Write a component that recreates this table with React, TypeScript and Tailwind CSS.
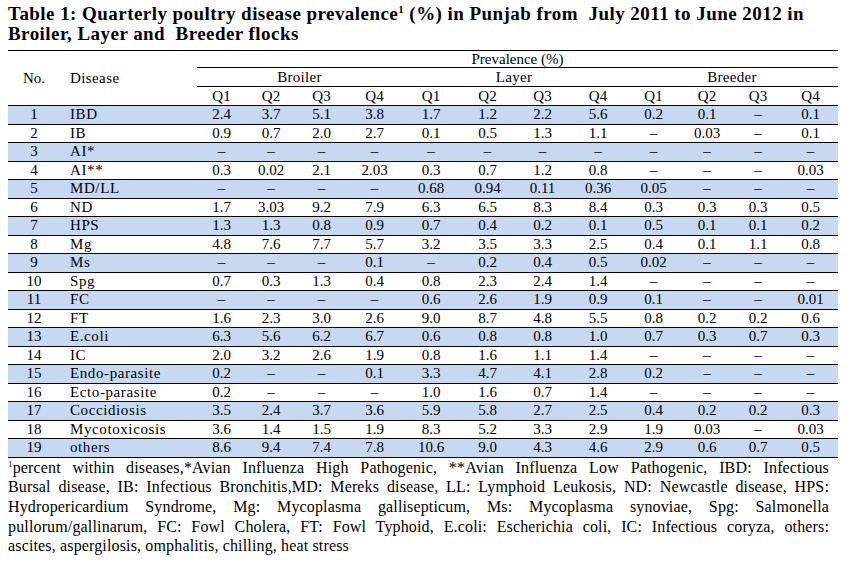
const widths = [49, 50, 51, 55, 58, 55, 55, 56, 55, 52, 50, 55];

type Row = [string, string, string[]];

const rows: Row[] = [
  ['1', 'IBD', ['2.4', '3.7', '5.1', '3.8', '1.7', '1.2', '2.2', '5.6', '0.2', '0.1', '–', '0.1']],
  ['2', 'IB', ['0.9', '0.7', '2.0', '2.7', '0.1', '0.5', '1.3', '1.1', '–', '0.03', '–', '0.1']],
  ['3', 'AI*', ['–', '–', '–', '–', '–', '–', '–', '–', '–', '–', '–', '–']],
  ['4', 'AI**', ['0.3', '0.02', '2.1', '2.03', '0.3', '0.7', '1.2', '0.8', '–', '–', '–', '0.03']],
  ['5', 'MD/LL', ['–', '–', '–', '–', '0.68', '0.94', '0.11', '0.36', '0.05', '–', '–', '–']],
  ['6', 'ND', ['1.7', '3.03', '9.2', '7.9', '6.3', '6.5', '8.3', '8.4', '0.3', '0.3', '0.3', '0.5']],
  ['7', 'HPS', ['1.3', '1.3', '0.8', '0.9', '0.7', '0.4', '0.2', '0.1', '0.5', '0.1', '0.1', '0.2']],
  ['8', 'Mg', ['4.8', '7.6', '7.7', '5.7', '3.2', '3.5', '3.3', '2.5', '0.4', '0.1', '1.1', '0.8']],
  ['9', 'Ms', ['–', '–', '–', '0.1', '–', '0.2', '0.4', '0.5', '0.02', '–', '–', '–']],
  ['10', 'Spg', ['0.7', '0.3', '1.3', '0.4', '0.8', '2.3', '2.4', '1.4', '–', '–', '–', '–']],
  ['11', 'FC', ['–', '–', '–', '–', '0.6', '2.6', '1.9', '0.9', '0.1', '–', '–', '0.01']],
  ['12', 'FT', ['1.6', '2.3', '3.0', '2.6', '9.0', '8.7', '4.8', '5.5', '0.8', '0.2', '0.2', '0.6']],
  ['13', 'E.coli', ['6.3', '5.6', '6.2', '6.7', '0.6', '0.8', '0.8', '1.0', '0.7', '0.3', '0.7', '0.3']],
  ['14', 'IC', ['2.0', '3.2', '2.6', '1.9', '0.8', '1.6', '1.1', '1.4', '–', '–', '–', '–']],
  ['15', 'Endo-parasite', ['0.2', '–', '–', '0.1', '3.3', '4.7', '4.1', '2.8', '0.2', '–', '–', '–']],
  ['16', 'Ecto-parasite', ['0.2', '–', '–', '–', '1.0', '1.6', '0.7', '1.4', '–', '–', '–', '–']],
  ['17', 'Coccidiosis', ['3.5', '2.4', '3.7', '3.6', '5.9', '5.8', '2.7', '2.5', '0.4', '0.2', '0.2', '0.3']],
  ['18', 'Mycotoxicosis', ['3.6', '1.4', '1.5', '1.9', '8.3', '5.2', '3.3', '2.9', '1.9', '0.03', '–', '0.03']],
  ['19', 'others', ['8.6', '9.4', '7.4', '7.8', '10.6', '9.0', '4.3', '4.6', '2.9', '0.6', '0.7', '0.5']],
];

const footLines = [
  'Bursal disease, IB: Infectious Bronchitis,MD: Mereks disease, LL: Lymphoid Leukosis, ND: Newcastle disease, HPS:',
  'Hydropericardium Syndrome, Mg: Mycoplasma gallisepticum, Ms: Mycoplasma synoviae, Spg: Salmonella',
  'pullorum/gallinarum, FC: Fowl Cholera, FT: Fowl Typhoid, E.coli: Escherichia coli, IC: Infectious coryza, others:',
];

function Cells({ values }: { values: string[] }) {
  return (
    <>
      {values.map((v, i) => (
        <div key={i} className="text-center shrink-0" style={{ width: widths[i] }}>
          {v}
        </div>
      ))}
    </>
  );
}

export default function App() {
  return (
    <div className="w-[852px] h-[567px] bg-white text-black font-['Liberation_Serif',serif] overflow-hidden">
      <div className="pl-[8px] pt-[4px] h-[50px] text-[19px] leading-[20px] font-bold tracking-[0.45px]">
        <div className="whitespace-nowrap">
          Table 1: Quarterly poultry disease prevalence
          <span className="align-super text-[11px] leading-none">1</span> (%) in Punjab from&nbsp; July 2011 to June 2012 in
        </div>
        <div>Broiler, Layer and&nbsp; Breeder flocks</div>
      </div>

      <div className="ml-[8px] w-[830px] text-[15px] leading-none">
        <div className="flex border-t border-b border-black">
          <div className="w-[52px] shrink-0 flex items-center justify-center">No.</div>
          <div className="w-[137px] shrink-0 flex items-center pl-[10px] tracking-[0.4px]">Disease</div>
          <div className="w-[641px] shrink-0">
            <div className="h-[17px] flex items-center justify-center border-b border-black">Prevalence (%)</div>
            <div className="h-[19px] flex items-center border-b border-black tracking-[0.3px]">
              <div className="w-[205px] text-center">Broiler</div>
              <div className="w-[224px] text-center">Layer</div>
              <div className="w-[212px] text-center">Breeder</div>
            </div>
            <div className="h-[18px] flex items-center">
              <Cells values={['Q1', 'Q2', 'Q3', 'Q4', 'Q1', 'Q2', 'Q3', 'Q4', 'Q1', 'Q2', 'Q3', 'Q4']} />
            </div>
          </div>
        </div>

        {rows.map(([no, name, values], i) => (
          <div
            key={no}
            className={`flex items-center h-[18.5px] border-b border-black ${i % 2 === 0 ? 'bg-[#c6d9f1]' : 'bg-white'}`}
          >
            <div className="w-[52px] shrink-0 text-center">{no}</div>
            <div className="w-[137px] shrink-0 pl-[10px] tracking-[0.6px]">{name}</div>
            <Cells values={values} />
          </div>
        ))}
      </div>

      <div className="ml-[8px] w-[821px] text-[16px] leading-[19.7px] tracking-[0.15px]">
        <div className="text-justify [text-align-last:justify]">
          <span className="align-super text-[9px] leading-none">1</span>percent within diseases,*Avian Influenza High
          Pathogenic, **Avian Influenza Low Pathogenic, IBD: Infectious
        </div>
        {footLines.map((line) => (
          <div key={line} className="text-justify [text-align-last:justify]">
            {line}
          </div>
        ))}
        <div>ascites, aspergilosis, omphalitis, chilling, heat stress</div>
      </div>
    </div>
  );
}
